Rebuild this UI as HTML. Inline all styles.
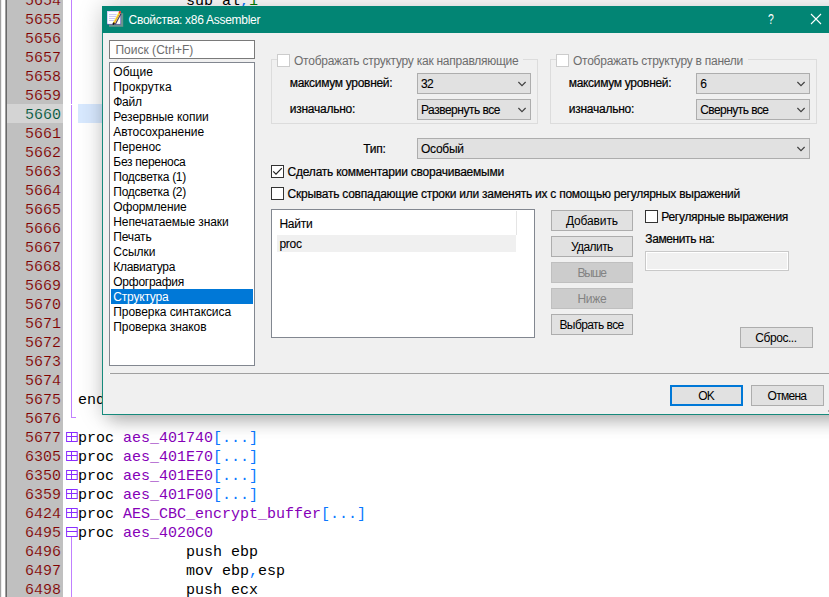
<!DOCTYPE html>
<html lang="ru"><head><meta charset="utf-8"><title>Свойства: x86 Assembler</title>
<style>
html,body{margin:0;padding:0}
body{width:829px;height:597px;overflow:hidden;background:#fff;position:relative;font-family:"Liberation Sans",sans-serif;font-size:12px}
div,svg{position:absolute;box-sizing:content-box}
.strip0{left:0;top:0;width:1px;height:597px;background:#a0a0a0}
.strip5{left:5px;top:0;width:1px;height:597px;background:#a0a0a0}
.strip6{left:6px;top:0;width:1px;height:597px;background:#696969}
.gutter{left:7px;top:0;width:56px;height:597px;background:#c0c0c0}
.gcur{left:7px;top:104px;width:56px;height:19px;background:#d4d4d4}
.ln,.cd{font-family:"Liberation Mono",monospace;font-size:15px;line-height:19px;height:19px;white-space:pre}
.ln{left:7px;width:54px;text-align:right;color:#800000;-webkit-text-stroke:0.15px #c0c0c0}
.ln.cur{color:#00563a;-webkit-text-stroke:0.15px #d4d4d4}
.cd{color:#000}
.p{color:#8600b8} .b{color:#0a78ff} .o{color:#008000}
.vline{left:71px;width:1px;background:#c080ff}
.curline{left:78px;top:104px;width:760px;height:19px;background:#d8e9ff}
.fold{left:66px;width:9px;height:8px;border:1px solid #9030ff;background:#fff}
.fold i{position:absolute;left:0;top:3.5px;width:9px;height:1px;background:#9030ff}
.fold b{position:absolute;left:4.5px;top:0;width:1px;height:8px;background:#9030ff}
.dlg{left:102px;top:6px;width:760px;height:408px;background:#f0f0f0;border:1px solid #168a7c;border-top:none;box-shadow:0 0 22px rgba(0,0,0,0.22),0 14px 16px -8px rgba(0,0,0,0.20)}
.tb{left:102px;top:6px;width:762px;height:27px;background:#028574}
.t{white-space:pre;line-height:15px;height:15px;font-size:12px}
.edit{background:#fff;border:1px solid #7a7a7a}
.grp{border:1px solid #dcdcdc}
.cbx{width:11px;height:11px;border:1px solid #333;background:#fff}
.cbx.dis{border-color:#ccc}
.combo{background:#e1e1e1;border:1px solid #adadad}
.chev{right:3px;top:7px}
.btn{background:#e1e1e1;border:1px solid #adadad;text-align:center;color:#000;white-space:pre;letter-spacing:-0.3px}
.btn.dis{background:#ccc;border-color:#bfbfbf;color:#838383}
.sel{left:111px;top:289px;width:142px;height:15px;background:#0078d7}
</style></head><body>
<div class="strip0"></div><div style="left:1px;top:0;width:1px;height:597px;background:#ececec"></div><div class="strip5"></div><div class="strip6"></div>
<div class="gutter"></div><div class="gcur"></div>
<div class="ln" style="top:-8px">5654</div><div class="ln" style="top:11px">5655</div><div class="ln" style="top:30px">5656</div><div class="ln" style="top:49px">5657</div><div class="ln" style="top:68px">5658</div><div class="ln" style="top:87px">5659</div><div class="ln cur" style="top:106px">5660</div><div class="ln" style="top:125px">5661</div><div class="ln" style="top:144px">5662</div><div class="ln" style="top:163px">5663</div><div class="ln" style="top:182px">5664</div><div class="ln" style="top:201px">5665</div><div class="ln" style="top:220px">5666</div><div class="ln" style="top:239px">5667</div><div class="ln" style="top:258px">5668</div><div class="ln" style="top:277px">5669</div><div class="ln" style="top:296px">5670</div><div class="ln" style="top:315px">5671</div><div class="ln" style="top:334px">5672</div><div class="ln" style="top:353px">5673</div><div class="ln" style="top:372px">5674</div><div class="ln" style="top:391px">5675</div><div class="ln" style="top:410px">5676</div><div class="ln" style="top:429px">5677</div><div class="ln" style="top:448px">6305</div><div class="ln" style="top:467px">6350</div><div class="ln" style="top:486px">6359</div><div class="ln" style="top:505px">6424</div><div class="ln" style="top:524px">6495</div><div class="ln" style="top:543px">6496</div><div class="ln" style="top:562px">6497</div><div class="ln" style="top:581px">6498</div>
<div class="curline"></div>
<div class="vline" style="top:0;height:104px"></div>
<div class="vline" style="top:105px;height:313px"></div>
<div class="vline" style="left:71px;top:417px;width:5px;height:1px"></div>
<div class="vline" style="top:537px;height:80px"></div>
<div class="cd" style="left:186px;top:-8px">sub al<span class="b">,</span><span class="o">1</span></div><div class="cd" style="left:78px;top:391px">end</div><div class="cd" style="left:78px;top:429px">proc <span class="p">aes_401740</span><span class="b">[...]</span></div><div class="cd" style="left:78px;top:448px">proc <span class="p">aes_401E70</span><span class="b">[...]</span></div><div class="cd" style="left:78px;top:467px">proc <span class="p">aes_401EE0</span><span class="b">[...]</span></div><div class="cd" style="left:78px;top:486px">proc <span class="p">aes_401F00</span><span class="b">[...]</span></div><div class="cd" style="left:78px;top:505px">proc <span class="p">AES_CBC_encrypt_buffer</span><span class="b">[...]</span></div><div class="cd" style="left:78px;top:524px">proc <span class="p">aes_4020C0</span></div><div class="cd" style="left:186px;top:543px">push ebp</div><div class="cd" style="left:186px;top:562px">mov ebp<span class="b">,</span>esp</div><div class="cd" style="left:186px;top:581px">push ecx</div>
<svg style="left:65px;top:431px" width="14" height="12" viewBox="0 0 14 12"><rect x="1.6" y="1.5" width="10.6" height="9" fill="#fff" stroke="#8a2cff"/><path d="M1.6 5.5H12.2M6.5 1.5V10.5" stroke="#8a2cff" fill="none"/></svg><svg style="left:65px;top:450px" width="14" height="12" viewBox="0 0 14 12"><rect x="1.6" y="1.5" width="10.6" height="9" fill="#fff" stroke="#8a2cff"/><path d="M1.6 5.5H12.2M6.5 1.5V10.5" stroke="#8a2cff" fill="none"/></svg><svg style="left:65px;top:469px" width="14" height="12" viewBox="0 0 14 12"><rect x="1.6" y="1.5" width="10.6" height="9" fill="#fff" stroke="#8a2cff"/><path d="M1.6 5.5H12.2M6.5 1.5V10.5" stroke="#8a2cff" fill="none"/></svg><svg style="left:65px;top:488px" width="14" height="12" viewBox="0 0 14 12"><rect x="1.6" y="1.5" width="10.6" height="9" fill="#fff" stroke="#8a2cff"/><path d="M1.6 5.5H12.2M6.5 1.5V10.5" stroke="#8a2cff" fill="none"/></svg><svg style="left:65px;top:507px" width="14" height="12" viewBox="0 0 14 12"><rect x="1.6" y="1.5" width="10.6" height="9" fill="#fff" stroke="#8a2cff"/><path d="M1.6 5.5H12.2M6.5 1.5V10.5" stroke="#8a2cff" fill="none"/></svg><svg style="left:65px;top:526px" width="14" height="12" viewBox="0 0 14 12"><rect x="1.6" y="1.5" width="10.6" height="9" fill="#fff" stroke="#8a2cff"/><path d="M1.6 5.5H12.2" stroke="#8a2cff" fill="none"/></svg>
<div class="dlg"></div>
<div class="tb"></div><div style="left:828px;top:410px;width:1px;height:2px;background:#a8a8a8"></div>
<svg style="left:107px;top:11px" width="18" height="17" viewBox="0 0 18 17">
<rect x="2" y="2.2" width="14.2" height="13.6" fill="#9a9a9a" fill-opacity="0.7"/>
<rect x="0" y="0" width="14" height="13.6" fill="#6a5cb4"/>
<rect x="0" y="0" width="13.2" height="12.8" fill="#d2cafa"/>
<rect x="0.9" y="0.9" width="12.3" height="11.9" fill="#fff"/>
<path d="M2 3.6h7.6M2 5.5h7M2 7.5h6M2 9.5h5" stroke="#c4c2f2" stroke-width="0.9"/>
<path d="M13.9 2.6 L8.3 13.2" stroke="#2e2350" stroke-width="1.3" stroke-opacity="0.85"/>
<path d="M12.8 1.2 L6.9 12.2" stroke="#f6e23a" stroke-width="2.1"/>
<path d="M12.9 1.9 L7.3 12.4" stroke="#ee5a2a" stroke-width="1" stroke-dasharray="1 1.1"/>
<circle cx="12.9" cy="1.2" r="1.15" fill="#ea3a26"/>
<path d="M7.1 11.7 L6.1 13.6" stroke="#1a1208" stroke-width="1.9"/>
</svg>
<div class="t" style="left:766.3px;top:11px;color:#fff;font-size:14px;line-height:17px;width:10px;text-align:center;transform:scaleX(0.75)">?</div>
<svg style="left:810px;top:13px" width="12" height="12" viewBox="0 0 12 12"><path d="M1 1 L11 11 M11 1 L1 11" stroke="#fff" stroke-width="1.1" fill="none"/></svg>

<div class="edit" style="left:109px;top:40px;width:144px;height:17px"></div>
<div class="edit" style="left:109px;top:62px;width:144px;height:302px;border-color:#828790"></div>
<div class="sel"></div>

<div class="grp" style="left:271px;top:59px;width:265px;height:63px"></div>
<div style="left:277px;top:54px;width:246px;height:13px;background:#f0f0f0"></div>
<div class="cbx dis" style="left:277px;top:54px"></div>
<div class="grp" style="left:550px;top:59px;width:265px;height:63px"></div>
<div style="left:556px;top:54px;width:192px;height:13px;background:#f0f0f0"></div>
<div class="cbx dis" style="left:556px;top:54px"></div>
<div class="combo" style="left:417px;top:73px;width:112px;height:19px"><svg class="chev" width="10" height="6" viewBox="0 0 10 6"><path d="M1.4 1 L5 4.6 L8.6 1" fill="none" stroke="#404040" stroke-width="1.15"/></svg></div><div class="combo" style="left:417px;top:99px;width:112px;height:19px"><svg class="chev" width="10" height="6" viewBox="0 0 10 6"><path d="M1.4 1 L5 4.6 L8.6 1" fill="none" stroke="#404040" stroke-width="1.15"/></svg></div><div class="combo" style="left:696px;top:73px;width:112px;height:19px"><svg class="chev" width="10" height="6" viewBox="0 0 10 6"><path d="M1.4 1 L5 4.6 L8.6 1" fill="none" stroke="#404040" stroke-width="1.15"/></svg></div><div class="combo" style="left:696px;top:99px;width:112px;height:19px"><svg class="chev" width="10" height="6" viewBox="0 0 10 6"><path d="M1.4 1 L5 4.6 L8.6 1" fill="none" stroke="#404040" stroke-width="1.15"/></svg></div><div class="combo" style="left:417px;top:138px;width:391px;height:19px"><svg class="chev" width="10" height="6" viewBox="0 0 10 6"><path d="M1.4 1 L5 4.6 L8.6 1" fill="none" stroke="#404040" stroke-width="1.15"/></svg></div>
<div class="cbx" style="left:271px;top:165px"><svg style="left:0;top:0" width="11" height="11" viewBox="0 0 11 11"><path d="M1.2 5.4 L4 8.1 L9.8 2.1" fill="none" stroke="#222" stroke-width="1.2"/></svg></div>
<div class="cbx" style="left:271px;top:187px"></div>
<div class="edit" style="left:271px;top:209px;width:262px;height:127px;border-color:#828790"></div>
<div style="left:277px;top:235px;width:239px;height:17px;background:#f0f0f0"></div>
<div style="left:516px;top:211px;width:1px;height:24px;background:#e5e5e5"></div>
<div class="btn " style="left:551px;top:210px;width:80px;height:19px;line-height:18px"></div><div class="btn " style="left:551px;top:236px;width:80px;height:19px;line-height:18px"></div><div class="btn dis" style="left:551px;top:262px;width:80px;height:19px;line-height:18px"></div><div class="btn dis" style="left:551px;top:288px;width:80px;height:19px;line-height:18px"></div><div class="btn " style="left:551px;top:314px;width:80px;height:19px;line-height:18px"></div><div class="btn " style="left:740px;top:327px;width:71px;height:19px;line-height:18px"></div><div class="btn " style="left:751px;top:385px;width:71px;height:19px;line-height:18px"></div>
<div class="cbx" style="left:645px;top:210px"></div>
<div style="left:645px;top:251px;width:142px;height:18px;border:1px solid #c9c9c9;background:#f0f0f0;box-shadow:inset 0 0 0 1px #fff"></div>
<div style="left:110px;top:373px;width:740px;height:1px;background:#a0a0a0"></div>
<div style="left:109px;top:373px;width:1px;height:1px;background:#fff"></div>
<div class="btn" style="left:670px;top:385px;width:69px;height:17px;line-height:16px;border:2px solid #0078d7"></div>
<div class="t" style="left:128.6px;top:13.0px;color:#fff;letter-spacing:-0.284px;">Свойства: x86 Assembler</div>
<div class="t" style="left:115.4px;top:43.0px;color:#6d6d6d;letter-spacing:0.023px;">Поиск (Ctrl+F)</div>
<div class="t" style="left:113.3px;top:65.0px;color:#000;letter-spacing:0.029px;">Общие</div>
<div class="t" style="left:113.3px;top:80.0px;color:#000;letter-spacing:0.117px;">Прокрутка</div>
<div class="t" style="left:113.3px;top:95.0px;color:#000;letter-spacing:-0.300px;">Файл</div>
<div class="t" style="left:113.3px;top:110.0px;color:#000;letter-spacing:-0.053px;">Резервные копии</div>
<div class="t" style="left:113.3px;top:125.0px;color:#000;letter-spacing:-0.055px;">Автосохранение</div>
<div class="t" style="left:113.3px;top:140.0px;color:#000;letter-spacing:-0.035px;">Перенос</div>
<div class="t" style="left:113.3px;top:155.0px;color:#000;letter-spacing:-0.285px;">Без переноса</div>
<div class="t" style="left:113.3px;top:170.0px;color:#000;letter-spacing:-0.272px;">Подсветка (1)</div>
<div class="t" style="left:113.3px;top:185.0px;color:#000;letter-spacing:-0.272px;">Подсветка (2)</div>
<div class="t" style="left:113.3px;top:200.0px;color:#000;letter-spacing:-0.128px;">Оформление</div>
<div class="t" style="left:113.3px;top:215.0px;color:#000;letter-spacing:-0.107px;">Непечатаемые знаки</div>
<div class="t" style="left:113.3px;top:230.0px;color:#000;letter-spacing:-0.185px;">Печать</div>
<div class="t" style="left:113.3px;top:245.0px;color:#000;letter-spacing:-0.008px;">Ссылки</div>
<div class="t" style="left:113.3px;top:260.0px;color:#000;letter-spacing:-0.330px;">Клавиатура</div>
<div class="t" style="left:113.3px;top:275.0px;color:#000;letter-spacing:-0.265px;">Орфография</div>
<div class="t" style="left:113.3px;top:290.0px;color:#fff;letter-spacing:-0.192px;">Структура</div>
<div class="t" style="left:113.3px;top:305.0px;color:#000;letter-spacing:-0.079px;">Проверка синтаксиса</div>
<div class="t" style="left:113.3px;top:320.0px;color:#000;letter-spacing:-0.075px;">Проверка знаков</div>
<div class="t" style="left:294.0px;top:54.0px;color:#6d6d6d;letter-spacing:-0.248px;">Отображать структуру как направляющие</div>
<div class="t" style="left:573.0px;top:54.0px;color:#6d6d6d;letter-spacing:-0.255px;">Отображать структуру в панели</div>
<div class="t" style="left:289.7px;top:76.3px;color:#000;letter-spacing:-0.304px;-webkit-text-stroke:0.2px #000;">максимум уровней:</div>
<div class="t" style="left:289.7px;top:102.3px;color:#000;letter-spacing:-0.235px;-webkit-text-stroke:0.2px #000;">изначально:</div>
<div class="t" style="left:568.7px;top:76.3px;color:#000;letter-spacing:-0.304px;-webkit-text-stroke:0.2px #000;">максимум уровней:</div>
<div class="t" style="left:568.7px;top:102.3px;color:#000;letter-spacing:-0.235px;-webkit-text-stroke:0.2px #000;">изначально:</div>
<div class="t" style="left:421.0px;top:77.0px;color:#000;letter-spacing:-0.774px;-webkit-text-stroke:0.1px #000;">32</div>
<div class="t" style="left:421.0px;top:103.0px;color:#000;letter-spacing:-0.490px;-webkit-text-stroke:0.1px #000;">Развернуть все</div>
<div class="t" style="left:700.2px;top:77.0px;color:#000;letter-spacing:-0.254px;-webkit-text-stroke:0.1px #000;">6</div>
<div class="t" style="left:700.2px;top:103.0px;color:#000;letter-spacing:-0.548px;-webkit-text-stroke:0.1px #000;">Свернуть все</div>
<div class="t" style="left:363.2px;top:141.5px;color:#000;letter-spacing:-0.259px;-webkit-text-stroke:0.2px #000;">Тип:</div>
<div class="t" style="left:421.0px;top:142.0px;color:#000;letter-spacing:-0.281px;-webkit-text-stroke:0.1px #000;">Особый</div>
<div class="t" style="left:287.6px;top:165.0px;color:#000;letter-spacing:-0.227px;-webkit-text-stroke:0.2px #000;">Сделать комментарии сворачиваемыми</div>
<div class="t" style="left:287.6px;top:187.0px;color:#000;letter-spacing:-0.251px;-webkit-text-stroke:0.2px #000;">Скрывать совпадающие строки или заменять их с помощью регулярных выражений</div>
<div class="t" style="left:279.4px;top:216.5px;color:#000;letter-spacing:-0.260px;-webkit-text-stroke:0.1px #000;">Найти</div>
<div class="t" style="left:279.4px;top:237.0px;color:#000;letter-spacing:-0.222px;-webkit-text-stroke:0.1px #000;">proc</div>
<div class="t" style="left:661.3px;top:209.8px;color:#000;letter-spacing:-0.294px;-webkit-text-stroke:0.2px #000;">Регулярные выражения</div>
<div class="t" style="left:645.3px;top:232.3px;color:#000;letter-spacing:-0.399px;-webkit-text-stroke:0.2px #000;">Заменить на:</div>
<div class="t" style="left:565.9px;top:213.8px;color:#000;letter-spacing:-0.129px;">Добавить</div>
<div class="t" style="left:571.0px;top:239.8px;color:#000;letter-spacing:-0.588px;">Удалить</div>
<div class="t" style="left:577.5px;top:265.8px;color:#838383;letter-spacing:-1.207px;">Выше</div>
<div class="t" style="left:577.5px;top:291.8px;color:#838383;letter-spacing:-0.293px;">Ниже</div>
<div class="t" style="left:559.4px;top:317.8px;color:#000;letter-spacing:-0.571px;">Выбрать все</div>
<div class="t" style="left:755.3px;top:330.8px;color:#000;letter-spacing:-0.449px;">Сброс...</div>
<div class="t" style="left:767.6px;top:388.8px;color:#000;letter-spacing:-0.726px;">Отмена</div>
<div class="t" style="left:698.2px;top:388.8px;color:#000;letter-spacing:-0.719px;">OK</div>
</body></html>
